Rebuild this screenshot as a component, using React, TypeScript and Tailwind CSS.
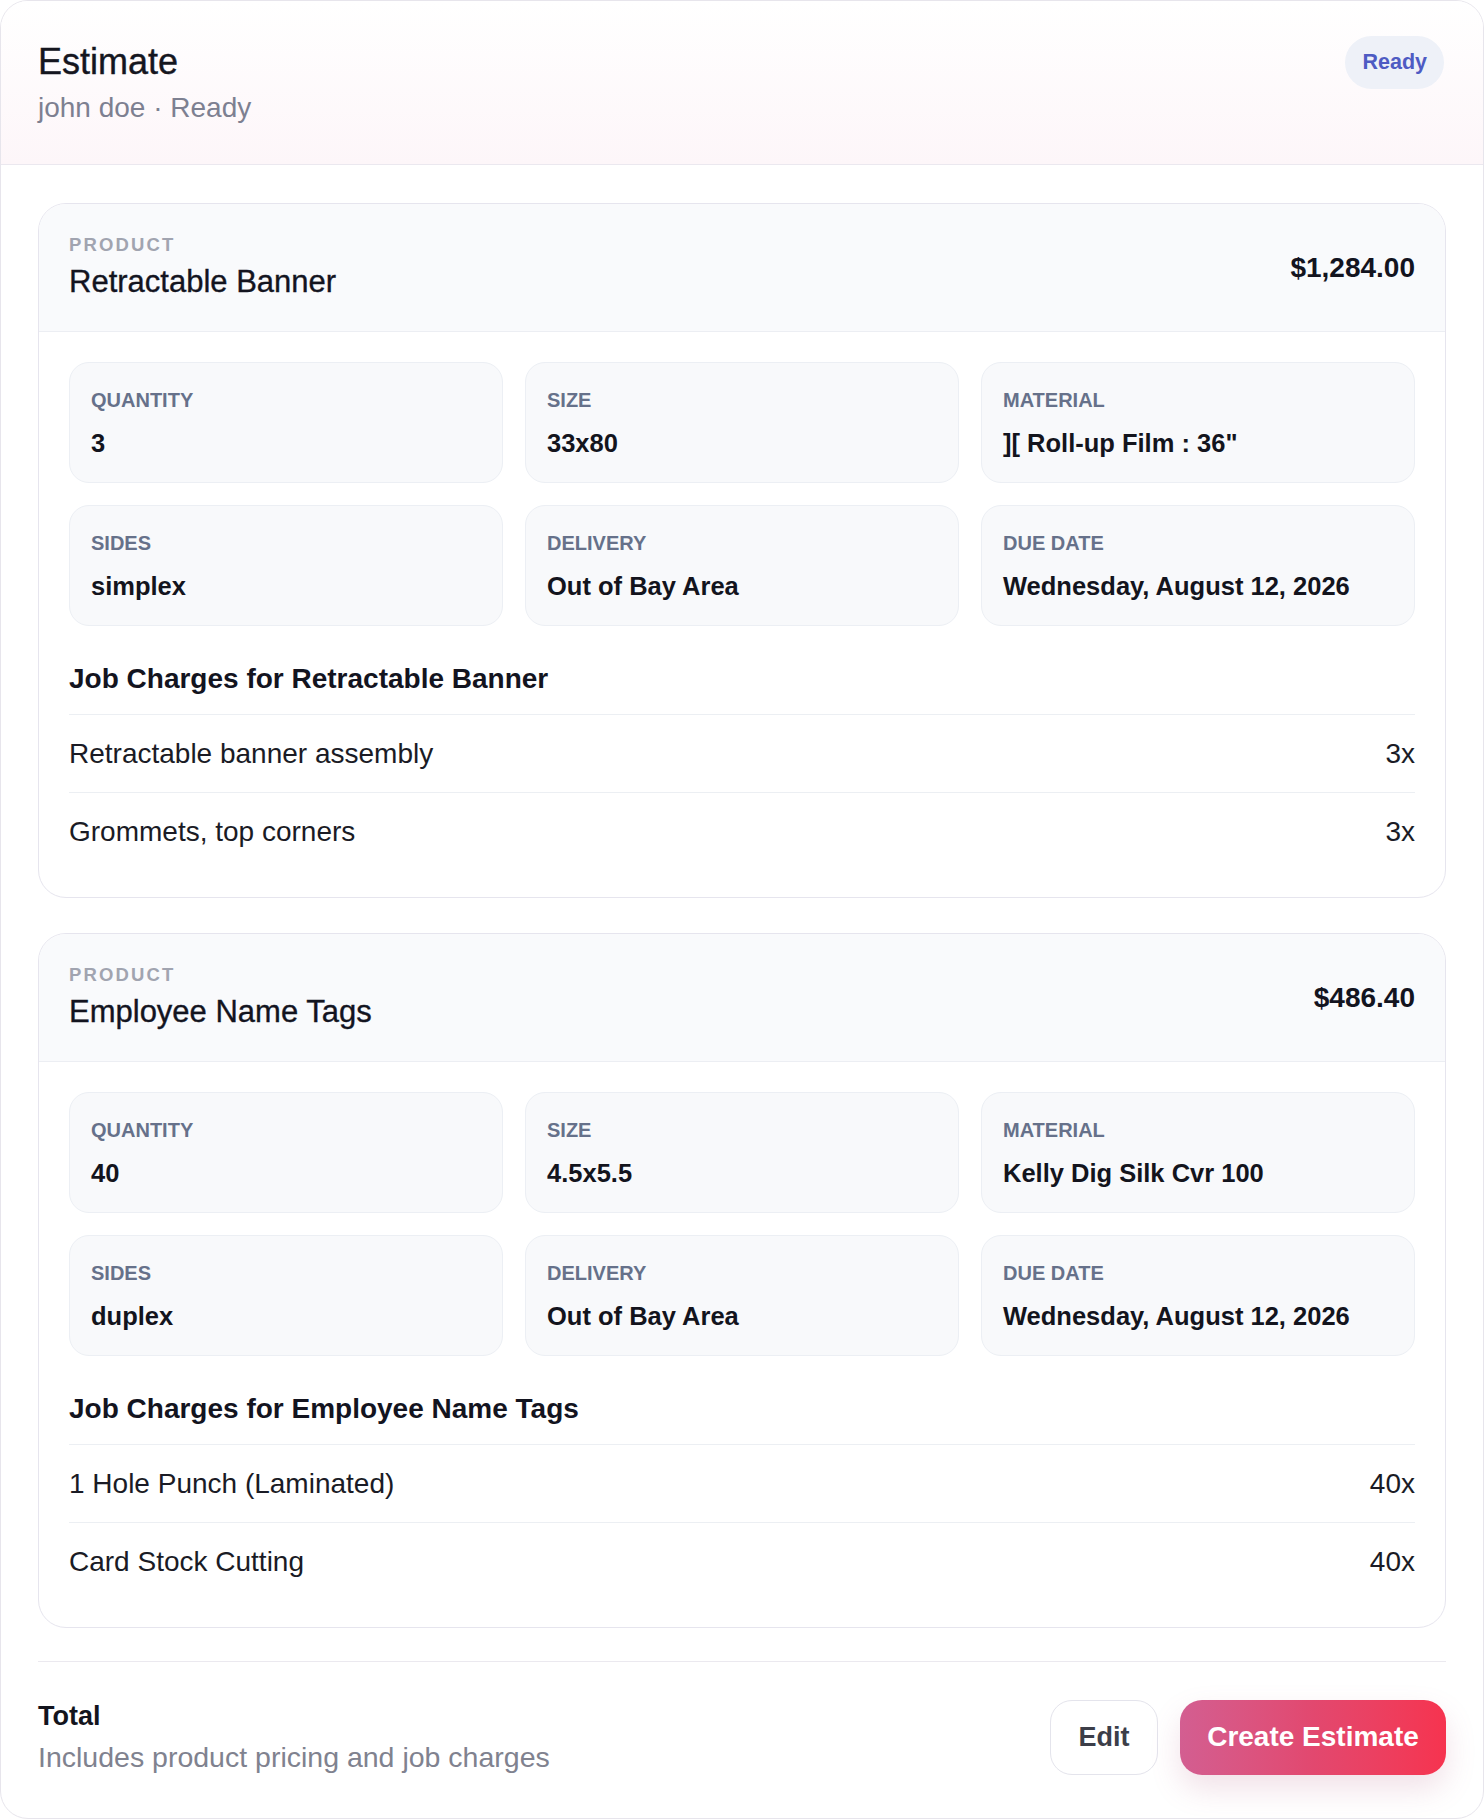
import React from "react";

type Detail = { label: string; value: string };
type Charge = { name: string; qty: string };
type Product = {
  name: string;
  price: string;
  details: Detail[];
  charges: Charge[];
};

const products: Product[] = [
  {
    name: "Retractable Banner",
    price: "$1,284.00",
    details: [
      { label: "QUANTITY", value: "3" },
      { label: "SIZE", value: "33x80" },
      { label: "MATERIAL", value: '][ Roll-up Film : 36"' },
      { label: "SIDES", value: "simplex" },
      { label: "DELIVERY", value: "Out of Bay Area" },
      { label: "DUE DATE", value: "Wednesday, August 12, 2026" },
    ],
    charges: [
      { name: "Retractable banner assembly", qty: "3x" },
      { name: "Grommets, top corners", qty: "3x" },
    ],
  },
  {
    name: "Employee Name Tags",
    price: "$486.40",
    details: [
      { label: "QUANTITY", value: "40" },
      { label: "SIZE", value: "4.5x5.5" },
      { label: "MATERIAL", value: "Kelly Dig Silk Cvr 100" },
      { label: "SIDES", value: "duplex" },
      { label: "DELIVERY", value: "Out of Bay Area" },
      { label: "DUE DATE", value: "Wednesday, August 12, 2026" },
    ],
    charges: [
      { name: "1 Hole Punch (Laminated)", qty: "40x" },
      { name: "Card Stock Cutting", qty: "40x" },
    ],
  },
];

function DetailBox({ label, value }: Detail) {
  return (
    <div className="rounded-[20px] border border-[#eceff4] bg-[#f8f9fb] px-[21px] pt-[25px] pb-[23px]">
      <div className="text-[20px] font-bold leading-[24px] text-[#66718a]">{label}</div>
      <div className="mt-[15px] text-[25.5px] font-bold leading-[32px] text-[#13141d] whitespace-nowrap">
        {value}
      </div>
    </div>
  );
}

function ProductCard({ product }: { product: Product }) {
  return (
    <div className="overflow-hidden rounded-[28px] border border-[#e6e5ee] bg-white">
      <div className="flex items-center justify-between border-b border-[#eceef3] bg-[#f9fafc] px-[30px] pt-[29px] pb-[29px]">
        <div>
          <div className="text-[18.5px] font-bold leading-[24px] tracking-[0.115em] text-[#a1a4b0]">
            PRODUCT
          </div>
          <div className="mt-[5px] text-[31px] leading-[40px] text-[#13141f] [-webkit-text-stroke:0.35px_#13141f]">
            {product.name}
          </div>
        </div>
        <div className="text-[28px] font-bold leading-[36px] text-[#13141f]">{product.price}</div>
      </div>
      <div className="px-[30px] pt-[30px] pb-[27px]">
        <div className="grid grid-cols-3 gap-[22px]">
          {product.details.map((d) => (
            <DetailBox key={d.label} label={d.label} value={d.value} />
          ))}
        </div>
        <div className="mt-[35px] mb-[17px] text-[28px] font-bold leading-[36px] text-[#13141f]">
          Job Charges for {product.name}
        </div>
        <div>
          {product.charges.map((c) => (
            <div
              key={c.name}
              className="flex items-center justify-between border-t border-[#eceff3] py-[20px] text-[28px] leading-[37px] text-[#1a1b25]"
            >
              <span>{c.name}</span>
              <span>{c.qty}</span>
            </div>
          ))}
        </div>
      </div>
    </div>
  );
}

export default function App() {
  return (
    <div className="min-h-screen bg-white font-['Liberation_Sans',Arial,sans-serif]">
      <div className="overflow-hidden rounded-[28px] border border-[#e7e5ec] bg-white">
        {/* header */}
        <div className="flex items-start justify-between border-b border-[#ebe8ef] bg-linear-to-b from-white to-[#fdf6f9] px-[37px] pt-[35px] pb-[38px]">
          <div className="pt-[4px]">
            <div className="text-[36px] leading-[44px] text-[#15161f] [-webkit-text-stroke:0.4px_#15161f]">
              Estimate
            </div>
            <div className="mt-[6px] text-[28px] leading-[36px] text-[#7d8091]">john doe · Ready</div>
          </div>
          <div className="mr-[2px] flex h-[53px] items-center rounded-full bg-[#eef1f8] px-[17px] text-[21.5px] font-bold text-[#4e5bc3]">
            Ready
          </div>
        </div>

        {/* products */}
        <div className="px-[37px] pt-[38px] pb-[43px]">
          <div className="flex flex-col gap-[35px]">
            {products.map((p) => (
              <ProductCard key={p.name} product={p} />
            ))}
          </div>

          {/* total + actions */}
          <div className="mt-[33px] border-t border-[#ebe9ef] pt-[37px]">
            <div className="flex items-center justify-between">
              <div>
                <div className="text-[27px] font-bold leading-[34px] text-[#13141d]">Total</div>
                <div className="mt-[6px] text-[28.5px] leading-[36px] text-[#80828f]">
                  Includes product pricing and job charges
                </div>
              </div>
              <div className="flex items-center gap-[22px]">
                <button className="flex h-[75px] w-[108px] items-center justify-center rounded-[22px] border border-[#e4e4ec] bg-white text-[27px] font-bold text-[#3c3e49]">
                  Edit
                </button>
                <button className="flex h-[75px] w-[266px] items-center justify-center rounded-[22px] bg-linear-to-r from-[#d35e91] via-[#e2486f] to-[#f6334f] text-[28px] font-bold text-white shadow-[0_14px_30px_rgba(180,90,130,0.18)]">
                  Create Estimate
                </button>
              </div>
            </div>
          </div>
        </div>
      </div>
    </div>
  );
}
